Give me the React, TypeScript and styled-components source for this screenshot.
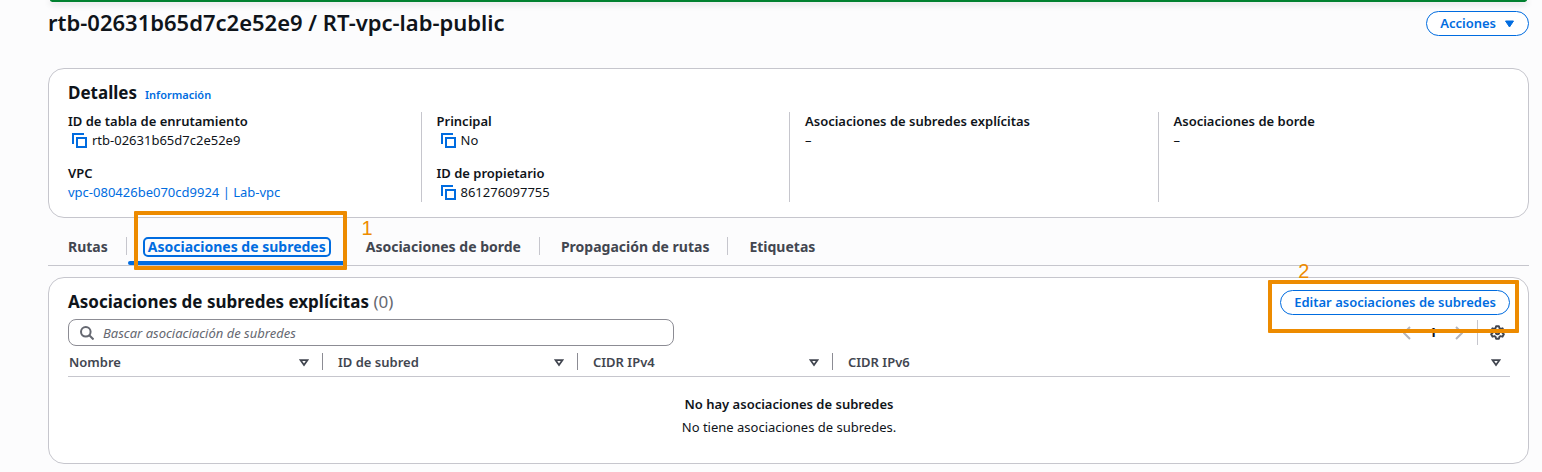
import React from "react";
import styled, { createGlobalStyle, css } from "styled-components";

const color = {
  page: "#fcfcfd",
  card: "#ffffff",
  text: "#0f141a",
  muted: "#656871",
  strong: "#424650",
  link: "#006ce0",
  border: "#c6c6cd",
  inputBorder: "#8c8c94",
  success: "#00802f",
  mark: "#ed8b00",
};

const GlobalStyle = createGlobalStyle`
  *, *::before, *::after { box-sizing: border-box; }
  body {
    margin: 0;
    background: ${color.page};
    color: ${color.text};
    font: 13px/19px "Noto Sans", "Open Sans", sans-serif;
  }
  button, input { font: inherit; color: inherit; }
  h1, h2, dl, dd, p { margin: 0; }
`;

const Page = styled.main`
  padding: 0 13px 8px 48px;
`;

const FlashBar = styled.div`
  height: 2px;
  margin: 0 2px;
  background: ${color.success};
  border-radius: 0 0 4px 4px / 0 0 2px 2px;
  box-shadow: 0 2px 6px 1px rgba(0, 7, 22, 0.12);
`;

const PageHeader = styled.header`
  display: flex;
  align-items: flex-start;
  justify-content: space-between;
  padding: 9px 0 32px;
`;

const PageTitle = styled.h1`
  font-size: 22px;
  line-height: 23px;
  font-weight: 600;
`;

const PillButton = styled.button`
  display: inline-flex;
  align-items: center;
  gap: 8px;
  height: 25px;
  padding: 0 13px;
  border: 1px solid ${color.link};
  border-radius: 20px;
  background: ${color.card};
  color: ${color.link};
  font-weight: 600;
  white-space: nowrap;
  cursor: pointer;
`;

const Card = styled.section`
  padding: 10px 18px 15px 19px;
  border: 1px solid ${color.border};
  border-radius: 16px;
  background: ${color.card};
`;

const CardHeader = styled.div`
  display: flex;
  align-items: baseline;
  gap: 8px;
  padding-bottom: 6px;
`;

const CardTitle = styled.h2`
  font-size: 17px;
  line-height: 27px;
  font-weight: 700;
`;

const Counter = styled.span`
  color: ${color.muted};
  font-weight: 400;
`;

const Link = styled.a<{ $small?: boolean }>`
  color: ${color.link};
  text-decoration: none;
  ${(p) => p.$small && css`font-size: 11px; font-weight: 600;`}
`;

const DetailGrid = styled.div`
  display: grid;
  grid-template-columns: repeat(4, 1fr);
  margin: 0 -16px;
`;

const DetailColumn = styled.dl`
  display: flex;
  flex-direction: column;
  gap: 14px;
  min-height: 90px;
  padding-left: 15px;
  border-left: 1px solid ${color.border};
  &:first-child { border-left-color: transparent; }
`;

const DetailLabel = styled.dt`
  font-weight: 600;
`;

const DetailValue = styled.dd`
  display: flex;
  align-items: center;
  gap: 5px;
`;

const IconButton = styled.button`
  display: inline-flex;
  align-items: center;
  justify-content: center;
  width: 20px;
  height: 19px;
  padding: 0;
  border: 0;
  background: none;
  color: ${color.strong};
  cursor: pointer;
`;

const CopyButton = styled(IconButton)`
  justify-content: flex-end;
  width: 19px;
  color: ${color.link};
`;

const TabBar = styled.div`
  display: flex;
  height: 48px;
  margin-bottom: 11px;
  border-bottom: 1px solid ${color.border};
`;

const TabItem = styled.div`
  position: relative;
  display: flex;
  align-items: flex-end;
  padding: 0 15px 8px;
  &:not(:last-child)::after {
    content: "";
    position: absolute;
    right: 1px;
    bottom: 10px;
    width: 1px;
    height: 18px;
    background: ${color.border};
  }
  &:nth-child(2)::after { display: none; }
`;

const Tab = styled.button<{ $active?: boolean }>`
  height: 20px;
  padding: 0 3px;
  border: 2px solid ${(p) => (p.$active ? color.link : "transparent")};
  border-radius: 5px;
  background: none;
  color: ${(p) => (p.$active ? color.link : color.strong)};
  font-size: 14px;
  line-height: 16px;
  font-weight: 700;
  white-space: nowrap;
  cursor: pointer;
`;

const ActiveLine = styled.span`
  position: absolute;
  left: 0;
  right: 1px;
  bottom: 0;
  height: 4px;
  border-radius: 2px;
  background: ${color.link};
`;

const Mark = styled.span<{ $inset: string; $number: string }>`
  position: absolute;
  inset: ${(p) => p.$inset};
  z-index: 1;
  border: 4px solid ${color.mark};
  border-radius: 1px;
  pointer-events: none;
  > span {
    position: absolute;
    inset: ${(p) => p.$number};
    color: ${color.mark};
    font: 20px/20px "Liberation Sans", sans-serif;
  }
`;

const TableHeader = styled.div`
  display: flex;
  align-items: flex-end;
  justify-content: space-between;
`;

const Marked = styled.div`
  position: relative;
  display: flex;
`;

const Toolbar = styled.div`
  display: flex;
  align-items: center;
  justify-content: space-between;
  padding-top: 4px;
`;

const SearchBox = styled.label`
  display: flex;
  align-items: center;
  gap: 9px;
  width: 42%;
  height: 27px;
  padding: 0 11px;
  border: 1px solid ${color.inputBorder};
  border-radius: 8px;
  color: ${color.muted};
`;

const SearchInput = styled.input`
  flex: 1;
  min-width: 0;
  padding: 2px 0 0;
  border: 0;
  outline: 0;
  background: none;
  &::placeholder { color: ${color.muted}; font-style: italic; opacity: 1; }
`;

const Pager = styled.div`
  display: flex;
  align-items: center;
`;

const PageNumber = styled(IconButton)`
  width: 32px;
  color: ${color.text};
  font-weight: 700;
`;

const PageArrow = styled(IconButton)`
  color: #b4b4bb;
`;

const Preferences = styled.div`
  display: flex;
  align-items: center;
  height: 25px;
  margin-left: 8px;
  padding: 0 3px 0 9px;
  border-left: 1px solid ${color.border};
`;

const Table = styled.table`
  width: 100%;
  table-layout: fixed;
  border-collapse: collapse;
`;

const HeaderCell = styled.th<{ $width?: string }>`
  width: ${(p) => p.$width ?? "auto"};
  height: 30px;
  padding: 2px 0 0;
  border-bottom: 1px solid ${color.border};
  color: ${color.strong};
  font-weight: 600;
  text-align: left;
`;

const HeaderContent = styled.div`
  display: flex;
  align-items: flex-start;
  justify-content: space-between;
  height: 17px;
  padding: 0 8px 0 15px;
  border-right: 1px solid ${color.inputBorder};
  th:first-child & { padding-left: 1px; }
  th:last-child & { border-right: 0; padding-right: 4px; }
`;

const EmptyCell = styled.td`
  padding: 18px 0 11px;
  text-align: center;
`;

const EmptyTitle = styled.p`
  padding-bottom: 4px;
  font-weight: 600;
`;

const CopyIcon = () => (
  <svg width="15" height="15" viewBox="0 0 15 15" fill="none" stroke="currentColor" strokeWidth="2" aria-hidden="true">
    <path d="M1 11V1h11" />
    <path d="M5 5h9v9H5z" />
  </svg>
);

const CaretFilled = () => (
  <svg width="11" height="8" viewBox="0 0 11 8" aria-hidden="true">
    <path d="M1.500 1h8L5.500 7z" fill="currentColor" stroke="currentColor" strokeLinejoin="round" />
  </svg>
);

const CaretOutline = () => (
  <svg width="10" height="8" viewBox="0 0 10 8" fill="none" aria-hidden="true">
    <path d="M1.600 1.200h6.800L5 6z" stroke="currentColor" strokeWidth="1.800" />
  </svg>
);

const SearchIcon = () => (
  <svg width="14" height="14" viewBox="0 0 14 14" fill="none" stroke="currentColor" strokeWidth="2" aria-hidden="true">
    <circle cx="5.8" cy="5.8" r="4.8" />
    <path d="M9.300 9.300l4.200 4.200" />
  </svg>
);

const Chevron = ({ next }: { next?: boolean }) => (
  <svg width="8" height="14" viewBox="0 0 8 14" fill="none" stroke="currentColor" strokeWidth="2" aria-hidden="true">
    <path d={next ? "M1 1l6 6-6 6" : "M7 1L1 7l6 6"} />
  </svg>
);

const GearIcon = () => (
  <svg width="15" height="15" viewBox="0 0 16 16" fill="none" stroke="currentColor" strokeWidth="2" strokeLinejoin="round" aria-hidden="true">
    <path d="M6.500 1.300h3l.5 2 1.300.8 2-.6 1.500 2.600L13.300 7.500v1l1.500 1.400-1.500 2.600-2-.6-1.300.8-.5 2h-3l-.5-2-1.300-.8-2 .6-1.500-2.600L2.700 8.500v-1L1.200 6.100l1.500-2.600 2 .6L6 3.300z" />
    <circle cx="8" cy="8" r="1.800" />
  </svg>
);

type Detail = { label: string; value: string; copy?: boolean; href?: string };

const details: Detail[][] = [
  [
    { label: "ID de tabla de enrutamiento", value: "rtb-02631b65d7c2e52e9", copy: true },
    { label: "VPC", value: "vpc-080426be070cd9924 | Lab-vpc", href: "#vpc" },
  ],
  [
    { label: "Principal", value: "No", copy: true },
    { label: "ID de propietario", value: "861276097755", copy: true },
  ],
  [{ label: "Asociaciones de subredes explícitas", value: "–" }],
  [{ label: "Asociaciones de borde", value: "–" }],
];

const tabs = [
  "Rutas",
  "Asociaciones de subredes",
  "Asociaciones de borde",
  "Propagación de rutas",
  "Etiquetas",
];
const activeTab = 1;

const columns = [
  { name: "Nombre", width: "255px" },
  { name: "ID de subred", width: "255px" },
  { name: "CIDR IPv4", width: "255px" },
  { name: "CIDR IPv6" },
];

export default function App() {
  return (
    <>
      <GlobalStyle />
      <Page>
        <FlashBar />
        <PageHeader>
          <PageTitle>rtb-02631b65d7c2e52e9 / RT-vpc-lab-public</PageTitle>
          <PillButton type="button">
            Acciones
            <CaretFilled />
          </PillButton>
        </PageHeader>

        <Card>
          <CardHeader>
            <CardTitle>Detalles</CardTitle>
            <Link $small href="#info">Información</Link>
          </CardHeader>
          <DetailGrid>
            {details.map((column) => (
              <DetailColumn key={column[0].label}>
                {column.map((item) => (
                  <div key={item.label}>
                    <DetailLabel>{item.label}</DetailLabel>
                    <DetailValue>
                      {item.copy && (
                        <CopyButton type="button" aria-label={`Copiar ${item.label}`}>
                          <CopyIcon />
                        </CopyButton>
                      )}
                      {item.href ? <Link href={item.href}>{item.value}</Link> : item.value}
                    </DetailValue>
                  </div>
                ))}
              </DetailColumn>
            ))}
          </DetailGrid>
        </Card>

        <TabBar role="tablist">
          {tabs.map((name, i) => (
            <TabItem key={name} role="presentation">
              <Tab type="button" role="tab" aria-selected={i === activeTab} $active={i === activeTab}>
                {name}
              </Tab>
              {i === activeTab && (
                <>
                  <ActiveLine />
                  <Mark $inset="-7px -1px -5px 6px" $number="3px -30px auto auto">
                    <span>1</span>
                  </Mark>
                </>
              )}
            </TabItem>
          ))}
        </TabBar>

        <Card>
          <TableHeader>
            <CardTitle>
              Asociaciones de subredes explícitas <Counter>(0)</Counter>
            </CardTitle>
            <Marked>
              <PillButton type="button">Editar asociaciones de subredes</PillButton>
              <Mark $inset="-10px -9px -18px -12px" $number="-23px auto auto 26px">
                <span>2</span>
              </Mark>
            </Marked>
          </TableHeader>
          <Toolbar>
            <SearchBox>
              <SearchIcon />
              <SearchInput
                type="text"
                aria-label="Buscar asociaciones de subredes"
                placeholder="Bascar asociaciación de subredes"
              />
            </SearchBox>
            <Pager>
              <PageArrow type="button" aria-label="Página anterior"><Chevron /></PageArrow>
              <PageNumber type="button">1</PageNumber>
              <PageArrow type="button" aria-label="Página siguiente"><Chevron next /></PageArrow>
              <Preferences>
                <IconButton type="button" aria-label="Preferencias"><GearIcon /></IconButton>
              </Preferences>
            </Pager>
          </Toolbar>
          <Table>
            <thead>
              <tr>
                {columns.map((c) => (
                  <HeaderCell key={c.name} scope="col" $width={c.width}>
                    <HeaderContent>
                      {c.name}
                      <IconButton type="button" aria-label={`Ordenar por ${c.name}`}>
                        <CaretOutline />
                      </IconButton>
                    </HeaderContent>
                  </HeaderCell>
                ))}
              </tr>
            </thead>
            <tbody>
              <tr>
                <EmptyCell colSpan={4}>
                  <EmptyTitle>No hay asociaciones de subredes</EmptyTitle>
                  <p>No tiene asociaciones de subredes.</p>
                </EmptyCell>
              </tr>
            </tbody>
          </Table>
        </Card>
      </Page>
    </>
  );
}
